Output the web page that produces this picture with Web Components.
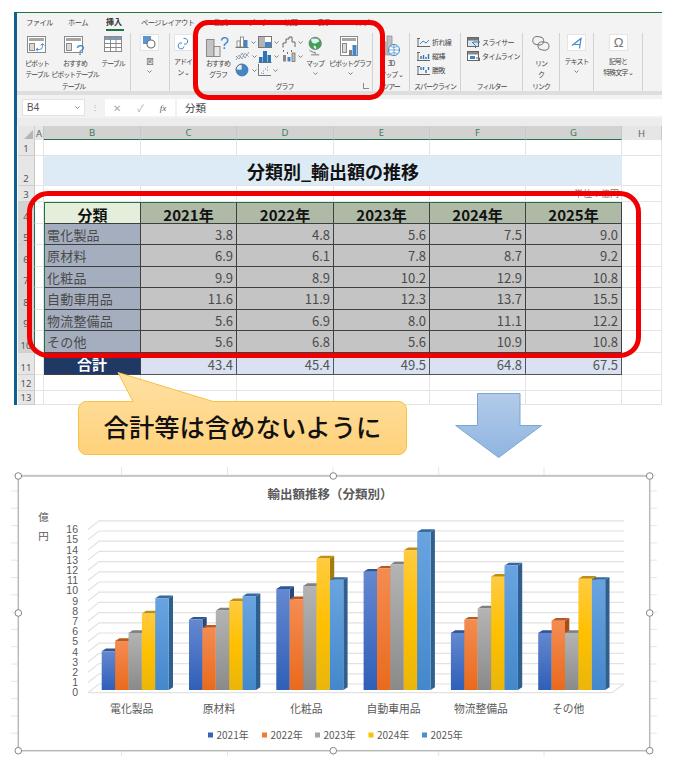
<!DOCTYPE html>
<html lang="ja">
<head>
<meta charset="utf-8">
<title>分類別_輸出額の推移</title>
<style>
  html, body { margin: 0; padding: 0; background: #fff; }
  body { width: 685px; height: 765px; overflow: hidden; position: relative; font-family: "Noto Sans CJK JP", "Noto Sans", sans-serif; }
  .page { display: flex; flex-direction: column; padding-top: 12px; }
  .stack { display: flex; flex-direction: column; }
  .three { display: grid; grid-template-columns: 23px 24px 16px; grid-auto-rows: 14px; }
</style>
</head>
<body>
<div class="page">
  <excel-window>
    <ribbon-tabs></ribbon-tabs>
    <ribbon-bar>
      <ribbon-group label="テーブル" width="114" pad="3">
        <ribbon-button icon="pivot" width="34">ピボット<br>テーブル</ribbon-button>
        <ribbon-button icon="recpivot" width="42">おすすめ<br>ピボットテーブル</ribbon-button>
        <ribbon-button icon="table" width="34">テーブル</ribbon-button>
      </ribbon-group>
      <ribbon-group width="39" pad="0">
        <ribbon-button icon="shapes" width="37" chevron boxed>図</ribbon-button>
      </ribbon-group>
      <ribbon-group width="27" pad="0">
        <ribbon-button icon="addin" width="26" boxed>アドイ<br>ン ⌄</ribbon-button>
      </ribbon-group>
      <ribbon-group label="グラフ" width="176" pad="4" launcher>
        <ribbon-button icon="recchart" width="34">おすすめ<br>グラフ</ribbon-button>
        <div class="three" style="padding-top:1px">
          <ribbon-mini icon="column" chevron></ribbon-mini>
          <ribbon-mini icon="treemap" chevron></ribbon-mini>
          <ribbon-mini icon="waterfall" chevron></ribbon-mini>
          <ribbon-mini icon="linechart" chevron></ribbon-mini>
          <ribbon-mini icon="stat" chevron></ribbon-mini>
          <ribbon-mini icon="combo" chevron></ribbon-mini>
          <ribbon-mini icon="pie" chevron></ribbon-mini>
          <ribbon-mini icon="scatter" chevron></ribbon-mini>
        </div>
        <ribbon-button icon="globe" width="34" chevron>マップ</ribbon-button>
        <ribbon-button icon="pivotchart" width="36" chevron>ピボットグラフ</ribbon-button>
      </ribbon-group>
      <ribbon-group label="ツアー" width="37" pad="0">
        <ribbon-button icon="map3d" width="36">3D<br>マップ ⌄</ribbon-button>
      </ribbon-group>
      <ribbon-group label="スパークライン" width="51" pad="7">
        <div class="stack" style="padding-top:1px">
          <ribbon-mini icon="sparkline" text="折れ線"></ribbon-mini>
          <ribbon-mini icon="sparkcol" text="縦棒"></ribbon-mini>
          <ribbon-mini icon="sparkwin" text="勝敗"></ribbon-mini>
        </div>
      </ribbon-group>
      <ribbon-group label="フィルター" width="62" pad="6">
        <div class="stack" style="padding-top:1px">
          <ribbon-mini icon="slicer" text="スライサー"></ribbon-mini>
          <ribbon-mini icon="timeline" text="タイムライン"></ribbon-mini>
        </div>
      </ribbon-group>
      <ribbon-group label="リンク" width="37" pad="0">
        <ribbon-button icon="link" width="36">リン<br>ク</ribbon-button>
      </ribbon-group>
      <ribbon-group width="34" pad="0">
        <ribbon-button icon="textbox" width="33" chevron boxed>テキスト</ribbon-button>
      </ribbon-group>
      <ribbon-group width="49" pad="0">
        <ribbon-button icon="symbol" width="48" boxed>記号と<br>特殊文字 ⌄</ribbon-button>
      </ribbon-group>
    </ribbon-bar>
    <formula-bar cell="B4" value="分類"></formula-bar>
    <sheet-grid></sheet-grid>
  </excel-window>
  <sales-chart></sales-chart>
</div>
<red-frame style="left:193px;top:20px;width:192px;height:80px;border-radius:15px"></red-frame>
<red-frame style="left:27px;top:191px;width:614px;height:167px;border-radius:21px"></red-frame>
<callout-note>合計等は含めないように</callout-note>
<down-arrow></down-arrow>

<script>
const FONT = '"Noto Sans CJK JP", "Noto Sans", sans-serif';

// tiny helper, every element is just css + markup in an open shadow root
function shadow(el, css, html) {
  const root = el.attachShadow({ mode: 'open' });
  root.innerHTML = `<style>${css}</style>${html}`;
  return root;
}

const G = '#8a8a8a', B = '#3f87c9';
const sheet = `<rect x=".5" y=".5" width="18" height="16" fill="#fff" stroke="${G}"/><rect x="2" y="2" width="15" height="3" fill="#a6a6a6"/><rect x="2.5" y="7.5" width="5" height="7" fill="#d9d9d9" stroke="${G}"/>`;
const ICONS = {
  pivot: [20, 18, `${sheet}<path d="M9.5 13.5h3a3 3 0 0 0 3-3V8M13.500 9.500l2-2 2 2M11 12l-2 1.500 2 1.500" fill="none" stroke="${B}" stroke-width=".9"/>`],
  recpivot: [22, 20, `${sheet}<text x="12" y="19" font-size="15" fill="${B}" font-family="Liberation Sans">?</text>`],
  table: [18, 16, `<rect x=".5" y=".5" width="17" height="15" fill="#fff" stroke="${G}"/><rect x="1" y="1" width="16" height="3" fill="#7d9bb5"/><path d="M.5 7.5h17M.5 11.5h17M6.5 1v14M12 1v14" stroke="${G}" fill="none"/>`],
  shapes: [13, 13, `<rect x="0" y="0" width="8" height="8" fill="#5b96d0"/><circle cx="8" cy="8" r="4" fill="#fff" stroke="#666" stroke-width="1.100"/>`],
  addin: [12, 12, `<path d="M6.5 1.5a3 3 0 0 1 4 3.5 2.5 2.5 0 0 1-3.5 2M5 6a3 3 0 1 0 2 3.5" fill="none" stroke="#3f87c9" stroke-width="1"/>`],
  recchart: [25, 21, `<rect x=".5" y="3.5" width="7.500" height="17" fill="#c4c4c4" stroke="${G}"/><rect x="8" y="10.500" width="6" height="10" fill="#e8e8e8" stroke="${G}"/><text x="14" y="13" font-size="16" fill="${B}" font-family="Liberation Sans">?</text>`],
  column: [14, 12, `<path d="M.5 11.500h13" stroke="#777"/><rect x="2" y="5" width="3" height="6" fill="#fff" stroke="#777" stroke-width=".8"/><rect x="5.500" y="1" width="3" height="10" fill="#fff" stroke="#777" stroke-width=".8"/><rect x="9" y="4" width="3.500" height="7" fill="#3f87c9"/>`],
  treemap: [14, 12, `<rect x=".5" y=".5" width="13" height="11" fill="#fff" stroke="#777"/><rect x="1" y="1" width="6" height="10" fill="#b4b4b4"/><rect x="7" y="6" width="6" height="5" fill="#3f87c9"/>`],
  waterfall: [14, 12, `<path d="M1 11.500V7h3V3h3V1h3v5h3v5" fill="none" stroke="#666"/>`],
  linechart: [15, 12, `<path d="M1 10l3-5 3 4 3-6 4 4M1 6l3 3 3-6 3 5 4-6" fill="none" stroke="#6a7f9a" stroke-width=".9" stroke-dasharray="1.500 .6"/>`],
  stat: [14, 13, `<path d="M.5 12.500h13" stroke="#777"/><rect x="1" y="7" width="3.500" height="5.500" fill="#2f75b5"/><rect x="5" y="1" width="4" height="11.500" fill="#2f75b5"/><rect x="9.500" y="5" width="3.500" height="7.500" fill="#2f75b5"/>`],
  combo: [14, 12, `<rect x="1" y="5" width="3" height="6.500" fill="#888"/><rect x="5.500" y="7" width="3" height="4.500" fill="#3f87c9"/><rect x="10" y="3" width="3" height="8.500" fill="#bbb" stroke="#666" stroke-width=".7"/><path d="M1 1h1M5 3h1M9 1h1" stroke="#444" stroke-width="1.300"/>`],
  pie: [15, 14, `<circle cx="7" cy="7" r="6" fill="#3f87c9"/><path d="M7 7V1a6 6 0 0 0-6 6z" fill="#e8eef5" stroke="#777" stroke-width=".7"/><circle cx="7" cy="7" r="6" fill="none" stroke="#2f6aa5" stroke-width=".7"/>`],
  scatter: [13, 12, `<path d="M.5 0v11.500H13" fill="none" stroke="#777"/><path d="M3 9h1M5 7h1M7 5h1M9 3h1M5 9.500h1M9 6h1" stroke="#5a8fc4" stroke-width="1.200"/>`],
  globe: [20, 24, `<circle cx="10" cy="9" r="7.500" fill="#3fa34d" stroke="#777"/><path d="M5 4c3-2 5 0 7-1 2 1 3 2 3 4-3 0-3 3-6 2-3 0-4-3-4-5zM8 12c2 0 4 0 3 4-2 0-3-2-3-4z" fill="#dfeff7"/><path d="M3 17c2 2 4 3 7 3M10 20v2M5 23h10" fill="none" stroke="#777" stroke-width="1.200"/>`, 0.82],
  pivotchart: [20, 21, `<rect x=".5" y=".5" width="17" height="19" fill="#fff" stroke="${G}"/><rect x="2" y="2" width="14" height="3" fill="#a6a6a6"/><rect x="2.500" y="7.500" width="4" height="9" fill="#d9d9d9" stroke="${G}"/><rect x="9" y="14" width="3" height="6" fill="#7f7f7f"/><rect x="12.500" y="9" width="4" height="11" fill="#3f87c9"/>`],
  map3d: [18, 20, `<rect x="0" y="6" width="4" height="13" fill="#bfbfbf" stroke="${G}" stroke-width=".7"/><rect x="5" y="0" width="5" height="19" fill="#bfbfbf" stroke="${G}" stroke-width=".7"/><circle cx="12" cy="14" r="5.500" fill="#fff" stroke="${B}"/><path d="M6.500 14h11M12 8.500v11M8.500 10.500c2 1 5 1 7 0M8.500 17.500c2-1 5-1 7 0" fill="none" stroke="${B}" stroke-width=".7"/>`],
  sparkline: [13, 9, `<path d="M1 0v9M0 8.500h13M0 .5h3" stroke="#666" fill="none"/><path d="M3 6l3-3 3 2 3-3" stroke="#3f87c9" fill="none"/>`],
  sparkcol: [13, 9, `<path d="M1 0v9M0 8.500h13M0 .5h3" stroke="#666" fill="none"/><path d="M4 7V4M6.500 7V3M9 7V5M11.500 7V2" stroke="#2f75b5" stroke-width="1.400"/>`],
  sparkwin: [13, 9, `<path d="M1 0v9M0 8.500h13M0 .5h3" stroke="#666" fill="none"/><path d="M4 4V1M6.500 4V1M9 7V4M11.500 4V1" stroke="#2f75b5" stroke-width="1.400"/>`],
  slicer: [13, 11, `<rect x=".5" y=".5" width="11" height="9" fill="#dbe5ef" stroke="#666"/><rect x="1" y="1" width="10" height="2.500" fill="#777"/><path d="M5 5l3.500 3.500V11M13 5H6" stroke="#2f75b5" fill="none"/>`],
  timeline: [13, 11, `<rect x=".5" y=".5" width="11" height="9" fill="#fff" stroke="#666"/><rect x="1" y="1" width="10" height="2.500" fill="#888"/><rect x="3" y="5" width="5" height="3" fill="#3f87c9"/><path d="M9 7h3.500v3" stroke="#666" fill="none"/>`],
  link: [18, 15, `<rect x=".7" y=".7" width="11" height="8" rx="4" fill="none" stroke="#777" stroke-width="1" transform="rotate(8 6 5)"/><rect x="6" y="6" width="11" height="8" rx="4" fill="none" stroke="#777" stroke-width="1" transform="rotate(8 11 10)"/>`],
  textbox: [12, 12, `<path d="M1 8.500l9-7-1.500 10M3.500 7.500h6" fill="none" stroke="#3f87c9" stroke-width="1.200"/>`],
  symbol: [14, 15, `<text x="7" y="12" text-anchor="middle" font-size="13" fill="#777" font-family="Liberation Sans">Ω</text>`]
};
function iconSvg(name) {
  const [w, h, body, k = 1] = ICONS[name];
  return `<svg width="${w * k}" height="${h * k}" viewBox="0 0 ${w} ${h}" style="overflow:visible;flex:none">${body}</svg>`;
}
const CHEVRON = `<svg width="5" height="3" viewBox="0 0 5 3" style="flex:none"><path d="M.5 .5l2 2 2-2" fill="none" stroke="#666" stroke-width=".8"/></svg>`;

class ExcelWindow extends HTMLElement {
  constructor() {
    super();
    shadow(this, `:host { display: flex; flex-direction: column; box-sizing: border-box; margin-left: 14px; width: 648px; height: 393px; border-left: 3px solid #10608f; border-top: 1px solid #217346; overflow: hidden; background: #fff; color: #444; font-family: ${FONT}; }`, `<slot></slot>`);
  }
}

class RibbonTabs extends HTMLElement {
  constructor() {
    super();
    const tabs = [['ファイル', 9, 24], ['ホーム', 18, 21], ['挿入', 17, 18], ['ページレイアウト', 17, 55], ['数式', 18, 16], ['データ', 18, 20], ['校閲', 16, 16], ['表示', 17, 16], ['ヘルプ', 16, 16]];
    shadow(this, `
      :host { display: flex; height: 21px; background: #f3f3f3; font-size: 7.300px; letter-spacing: -.6px; align-items: center; color: #444; padding-bottom: 2px; box-sizing: border-box; }
      span { white-space: nowrap; display: block; line-height: 17px; flex: none; }
      .on { font-weight: 700; font-size: 8px; letter-spacing: 0; border-bottom: 2px solid #217346; line-height: 14px; margin-top: 1px; color: #333; }
    `, tabs.map(([t, m, w], i) => `<span class="${i === 2 ? 'on' : ''}" style="margin-left:${m}px;width:${w}px">${t}</span>`).join(''));
  }
}

class RibbonBar extends HTMLElement {
  constructor() {
    super();
    shadow(this, `:host { display: flex; height: 58px; background: #f3f3f3; border-bottom: 4px solid #dedede; }`, `<slot></slot>`);
  }
}

class RibbonGroup extends HTMLElement {
  constructor() {
    super();
    const label = this.getAttribute('label') || '';
    const launcher = this.hasAttribute('launcher');
    shadow(this, `
      :host { display: flex; flex-direction: column; flex: none; box-sizing: border-box; height: 58px; border-right: 1px solid #d2d2d2; width: ${this.getAttribute('width')}px; padding-top: 1px; position: relative; }
      .body { display: flex; height: 47px; padding-left: ${this.getAttribute('pad')}px; }
      .label { height: 10px; line-height: 10px; text-align: center; font-size: 7px; letter-spacing: -1px; color: #444; white-space: nowrap; }
      .launch { position: absolute; right: 3px; bottom: 2px; width: 5px; height: 5px; border-left: 1px solid #888; border-bottom: 1px solid #888; }
    `, `<div class="body"><slot></slot></div><div class="label">${label}</div>${launcher ? '<div class="launch"></div>' : ''}`);
  }
}

class RibbonButton extends HTMLElement {
  constructor() {
    super();
    const boxed = this.hasAttribute('boxed');
    const chevron = this.hasAttribute('chevron');
    shadow(this, `
      :host { display: flex; flex-direction: column; align-items: center; flex: none; width: ${this.getAttribute('width')}px; font-size: 7px; letter-spacing: -1px; line-height: 10.500px; color: #444; }
      .icon { height: 24px; box-sizing: border-box; padding-top: 2px; display: flex; align-items: flex-start; justify-content: center; }
      .box { width: 19px; height: 17px; margin-bottom: 5px; padding-top: 0; align-items: center; background: #fff; border: 1px solid #e4e4e4; }
      .text { text-align: center; white-space: nowrap; }
      .chev { display: flex; justify-content: center; height: 9px; align-items: center; }
    `, `<div class="icon ${boxed ? 'box' : ''}">${iconSvg(this.getAttribute('icon'))}</div>
        <div class="text"><slot></slot></div>${chevron ? `<div class="chev">${CHEVRON}</div>` : ''}`);
  }
}

class RibbonMini extends HTMLElement {
  constructor() {
    super();
    const text = this.getAttribute('text');
    shadow(this, `
      :host { display: flex; align-items: center; gap: 2px; height: 14px; font-size: 7px; letter-spacing: -.6px; color: #444; white-space: nowrap; }
    `, `${iconSvg(this.getAttribute('icon'))}${text ? `<span>${text}</span>` : ''}${this.hasAttribute('chevron') ? CHEVRON : ''}`);
  }
}

class FormulaBar extends HTMLElement {
  constructor() {
    super();
    shadow(this, `
      :host { display: flex; flex: none; height: 23px; background: #f2f2f2; align-items: flex-start; padding-top: 4px; box-sizing: border-box; }
      .name, .fx, .value { height: 17px; background: #fff; box-sizing: border-box; display: flex; align-items: center; }
      .name { width: 63px; margin-left: 5px; padding: 0 4px; justify-content: space-between; border: 1px solid #e2e2e2; font: 10px "Liberation Sans", sans-serif; color: #555; }
      .dots { width: 20px; text-align: center; color: #aaa; font-size: 8px; line-height: 15px; }
      .fx { width: 70px; padding-left: 8px; gap: 16px; color: #aaa; font-size: 10px; }
      .fx i { font: italic 9px "Liberation Serif", serif; color: #555; }
      .value { flex: 1; margin-left: 2px; padding-left: 8px; font-size: 10.500px; color: #444; }
    `, `<div class="name">${this.getAttribute('cell')}${CHEVRON}</div><div class="dots">⋮</div>
        <div class="fx"><span>✕</span><span>✓</span><i>fx</i></div><div class="value">${this.getAttribute('value')}</div>`);
  }
}

class SheetGrid extends HTMLElement {
  constructor() {
    super();
    const cols = ['A', 'B', 'C', 'D', 'E', 'F', 'G', 'H'];
    const rowHeights = [16, 30, 16, 22, 21, 22, 21, 22, 21, 22, 22, 16, 14];
    const years = ['2021年', '2022年', '2023年', '2024年', '2025年'];
    const data = [
      ['電化製品', '3.8', '4.8', '5.6', '7.5', '9.0'],
      ['原材料', '6.9', '6.1', '7.8', '8.7', '9.2'],
      ['化粧品', '9.9', '8.9', '10.2', '12.9', '10.8'],
      ['自動車用品', '11.6', '11.9', '12.3', '13.7', '15.5'],
      ['物流整備品', '5.6', '6.9', '8.0', '11.1', '12.2'],
      ['その他', '5.6', '6.8', '5.6', '10.9', '10.8']
    ];
    const totals = ['43.4', '45.4', '49.5', '64.8', '67.5'];

    let html = `<div class="corner"><svg width="11" height="11" viewBox="0 0 11 11"><path d="M10 1v9H1z" fill="#b5b5b5"/></svg></div>`;
    cols.forEach(c => {
      const on = c !== 'A' && c !== 'H';
      html += `<div class="colhdr ${on ? 'sel' : ''}">${c}</div>`;
    });
    rowHeights.forEach((_, r) => {
      const row = r + 1;
      const on = row >= 4 && row <= 10;
      html += `<div class="rowhdr ${on ? 'sel' : ''}">${row}</div>`;
      html += `<div class="c"></div>`; // column A
      if (row === 2) {
        html += `<div class="title" style="grid-column: span 6">分類別_輸出額の推移</div>`;
      } else if (row === 4) {
        html += `<div class="c th first">分類</div>` + years.map(y => `<div class="c th yr">${y}</div>`).join('');
      } else if (row >= 5 && row <= 10) {
        const d = data[row - 5];
        html += `<div class="c lab">${d[0]}</div>` + d.slice(1).map(v => `<div class="c val">${v}</div>`).join('');
      } else if (row === 11) {
        html += `<div class="c sum">合計</div>` + totals.map(v => `<div class="c tot">${v}</div>`).join('');
      } else {
        for (let i = 0; i < 6; i++) {
          html += (row === 3 && i === 5) ? `<div class="c unit">単位：億円</div>` : `<div class="c"></div>`;
        }
      }
      html += `<div class="c"></div>`; // column H
    });

    shadow(this, `
      :host { display: block; flex: 1; background: #fff; padding-top: 8px; padding-left: 1px; position: relative; }
      :host::before { content: ""; position: absolute; left: 0; right: 0; top: 0; height: 8px; background: #ececec; }
      .grid { display: grid; grid-template-columns: 17px 9px 97px 96px 97px 96px 96px 96px 40px; grid-template-rows: 14px ${rowHeights.map(h => h + 'px').join(' ')}; font-size: 13px; color: #4a4a4a; position: relative; }
      .grid > div { box-sizing: border-box; min-width: 0; white-space: nowrap; }
      .corner { background: #e6e6e6; display: flex; justify-content: flex-end; align-items: flex-end; border-right: 1px solid #ccc; }
      .colhdr { background: #e6e6e6; color: #666; font: 9.500px "Noto Sans", sans-serif; display: flex; align-items: center; justify-content: center; border-right: 1px solid #c8c8c8; }
      .colhdr.sel { background: #d2d2d2; color: #3f7a5c; border-bottom: 1px solid #217346; }
      .rowhdr { background: #e6e6e6; color: #555; font: 9.500px/12px "Noto Sans", sans-serif; display: flex; align-items: flex-end; justify-content: center; border-bottom: 1px solid #cfcfcf; border-right: 1px solid #c8c8c8; }
      .rowhdr.sel { background: #d2d2d2; border-right: 1px solid #217346; }
      .c { border-right: 1px solid #e4e4e4; border-bottom: 1px solid #e4e4e4; display: flex; align-items: center; }
      .title { background: #ddebf7; color: #111; font-size: 18px; font-weight: 700; display: flex; align-items: center; justify-content: center; border-bottom: 1px solid #e4e4e4; }
      .th { justify-content: center; font-size: 15px; font-weight: 700; color: #111; border-right: 1px solid #3f3f3f; border-bottom: 1px solid #3f3f3f; border-top: 1px solid #217346; padding-top: 2px; }
      .th.first { background: #e3efdb; border-left: 1px solid #217346; }
      .th.yr { background: #aeb9a6; }
      .lab { background: #a5aebf; padding-left: 2px; border-right: 1px solid #3f3f3f; border-bottom: 1px solid #3f3f3f; border-left: 1px solid #217346; letter-spacing: .2px; }
      .val { background: #c4c4c4; justify-content: flex-end; padding-right: 3px; border-right: 1px solid #3f3f3f; border-bottom: 1px solid #3f3f3f; }
      .sum { background: #203864; color: #fff; justify-content: center; font-size: 15px; font-weight: 700; border-right: 1px solid #3f3f3f; border-bottom: 1px solid #3f3f3f; }
      .tot { background: #d9e1f2; justify-content: flex-end; padding-right: 3px; padding-top: 2px; border-right: 1px solid #555; border-bottom: 1px solid #555; color: #555; }
      .unit { justify-content: flex-end; font-size: 9px; color: #777; padding-right: 2px; }
    `, `<div class="grid">${html}</div>`);
  }
}

// the red marker frames drawn on top of the capture
class RedFrame extends HTMLElement {
  constructor() {
    super();
    shadow(this, `:host { position: absolute; box-sizing: border-box; border: 5px solid #f00000; display: block; }`, ``);
  }
}

class CalloutNote extends HTMLElement {
  constructor() {
    super();
    shadow(this, `
      :host { position: absolute; left: 70px; top: 365px; width: 345px; height: 98px; display: block; }
      svg { position: absolute; inset: 0; }
      .t { position: absolute; left: 0; right: 0; top: 34px; height: 54px; display: flex; align-items: center; justify-content: center; font-size: 25.300px; font-weight: 500; color: #111; white-space: nowrap; font-family: ${FONT}; }
    `, `<svg width="345" height="98" viewBox="70 365 345 98">
        <defs><linearGradient id="f" x1="0" y1="0" x2="0" y2="1"><stop offset="0" stop-color="#ffe0a3"/><stop offset="1" stop-color="#ffd27c"/></linearGradient></defs>
        <path d="M86.500 401.500H133L118 372.500 213 401.500H398.500a8 8 0 0 1 8 8v37a8 8 0 0 1-8 8H86.500a8 8 0 0 1-8-8v-37a8 8 0 0 1 8-8z" fill="url(#f)" stroke="#f5c242"/>
      </svg><div class="t"><slot></slot></div>`);
  }
}

class DownArrow extends HTMLElement {
  constructor() {
    super();
    shadow(this, `:host { position: absolute; left: 450px; top: 390px; width: 96px; height: 72px; display: block; } svg { display: block; }`,
      `<svg width="96" height="72" viewBox="450 390 96 72">
        <defs><linearGradient id="a" x1="0" y1="0" x2="0" y2="1"><stop offset="0" stop-color="#b3cbe9"/><stop offset="1" stop-color="#8fb5e0"/></linearGradient></defs>
        <path d="M477.500 393.500H520V425.500H541.500L498.700 457.500 455.700 425.500H477.500z" fill="url(#a)" stroke="#7ba5d3"/>
      </svg>`);
  }
}

class SalesChart extends HTMLElement {
  constructor() {
    super();
    const cats = ['電化製品', '原材料', '化粧品', '自動車用品', '物流整備品', 'その他'];
    const values = [
      [3.8, 4.8, 5.6, 7.5, 9.0],
      [6.9, 6.1, 7.8, 8.7, 9.2],
      [9.9, 8.9, 10.2, 12.9, 10.8],
      [11.6, 11.9, 12.3, 13.7, 15.5],
      [5.6, 6.9, 8.0, 11.1, 12.2],
      [5.6, 6.8, 5.6, 10.9, 10.8]
    ];
    const series = [
      { stops: ['#6488d0', '#2f5fb8'], top: '#2f5597', side: '#27477f' },
      { stops: ['#f48c52', '#ea6a1c'], top: '#b9591f', side: '#a54e18' },
      { stops: ['#b4b4b4', '#8a8a8a'], top: '#808080', side: '#6c6c6c' },
      { stops: ['#ffcb40', '#ffc000', '#e9b60a'], top: '#bf9010', side: '#a47b0e' },
      { stops: ['#69a4e0', '#4388cc'], top: '#35699f', side: '#2f5f8e' }
    ];
    const unit = 10.2, frontY = 692.7, backY = 684, barBase = 690;
    const dx = 4.3, dy = 2.7, barW = 13.4;

    let s = '<defs>';
    series.forEach((c, i) => {
      s += `<linearGradient id="s${i}" x1="0" y1="0" x2="0" y2="1">` + c.stops.map((col, k) => `<stop offset="${k / (c.stops.length - 1)}" stop-color="${col}"/>`).join('') + `</linearGradient>`;
    });
    s += '</defs>';

    // ruler ticks around the selected chart
    let ticks = '';
    for (let y = 491; y < 750; y += 17.3) ticks += `M11 ${y}H18M650 ${y}H657`;
    [121.5, 227.5, 333, 438.7, 544].forEach(x => { ticks += `M${x} 467V476M${x} 750V756`; });
    s += `<path d="${ticks}M12 475H656" stroke="#e6e6e6" fill="none"/>`;

    // walls and floor
    let grid = '';
    for (let v = 0; v <= 16; v++) {
      const by = backY - v * unit, fy = frontY - v * unit;
      grid += `M88 ${fy}L99 ${by}H624`;
    }
    grid += `M88 ${frontY}H612L624 ${backY}`;
    s += `<path d="${grid}" stroke="#e2e2e2" stroke-width="1.200" fill="none"/>`;

    // bars, left to right so the next bar hides the side of the previous one
    values.forEach((vals, g) => {
      const x0 = 101.7 + g * 87.3;
      vals.forEach((v, i) => {
        const x = x0 + i * barW, y = barBase - v * unit, c = series[i];
        s += `<polygon points="${x + barW},${y} ${x + barW + dx},${y - dy} ${x + barW + dx},${barBase - dy} ${x + barW},${barBase}" fill="${c.side}"/>`;
        s += `<polygon points="${x},${y} ${x + barW},${y} ${x + barW + dx},${y - dy} ${x + dx},${y - dy}" fill="${c.top}"/>`;
        s += `<rect x="${x}" y="${y}" width="${barW}" height="${barBase - y}" fill="url(#s${i})"/>`;
      });
      s += `<text x="${x0 + 30}" y="713" text-anchor="middle" font-size="10.800">${cats[g]}</text>`;
    });

    for (let v = 0; v <= 16; v++) {
      s += `<text class="num" x="78" y="${frontY - v * unit + 3.6}" text-anchor="end">${v}</text>`;
    }
    s += `<text x="43.500" y="521" text-anchor="middle" font-size="10.500">億</text><text x="43.500" y="540" text-anchor="middle" font-size="10.500">円</text>`;
    s += `<text x="330" y="499" text-anchor="middle" font-size="12.500" font-weight="700">輸出額推移（分類別）</text>`;

    // legend
    const legend = [[208, '2021年', '#3565b5'], [262, '2022年', '#ed7d31'], [315, '2023年', '#a5a5a5'], [368.500, '2024年', '#ffc000'], [422, '2025年', '#4a90d0']];
    legend.forEach(([x, t, col]) => {
      s += `<rect x="${x}" y="732.500" width="5" height="5" fill="${col}"/><text x="${x + 8.500}" y="739" font-size="10">${t}</text>`;
    });

    // frame and handles
    s += `<rect x="18.300" y="476" width="631.400" height="274.700" fill="none" stroke="#b9b9b9" stroke-width="1.500"/>`;
    [[18.3, 476], [333.3, 476], [649.7, 476], [18.3, 613], [649.7, 613], [18.3, 750.7], [333.3, 750.7], [649.7, 750.7]].forEach(([x, y]) => {
      s += `<circle cx="${x}" cy="${y}" r="3.300" fill="#fff" stroke="#858585"/>`;
    });

    shadow(this, `
      :host { display: block; width: 685px; height: 300px; margin-top: 60px; }
      svg { display: block; }
      text { fill: #595959; font-family: ${FONT}; }
      text.num { font: 10.500px "Liberation Sans", sans-serif; }
    `, `<svg width="685" height="300" viewBox="0 465 685 300">${s}</svg>`);
  }
}

customElements.define('excel-window', ExcelWindow);
customElements.define('ribbon-tabs', RibbonTabs);
customElements.define('ribbon-bar', RibbonBar);
customElements.define('ribbon-group', RibbonGroup);
customElements.define('ribbon-button', RibbonButton);
customElements.define('ribbon-mini', RibbonMini);
customElements.define('formula-bar', FormulaBar);
customElements.define('sheet-grid', SheetGrid);
customElements.define('red-frame', RedFrame);
customElements.define('callout-note', CalloutNote);
customElements.define('down-arrow', DownArrow);
customElements.define('sales-chart', SalesChart);
</script>
</body>
</html>
